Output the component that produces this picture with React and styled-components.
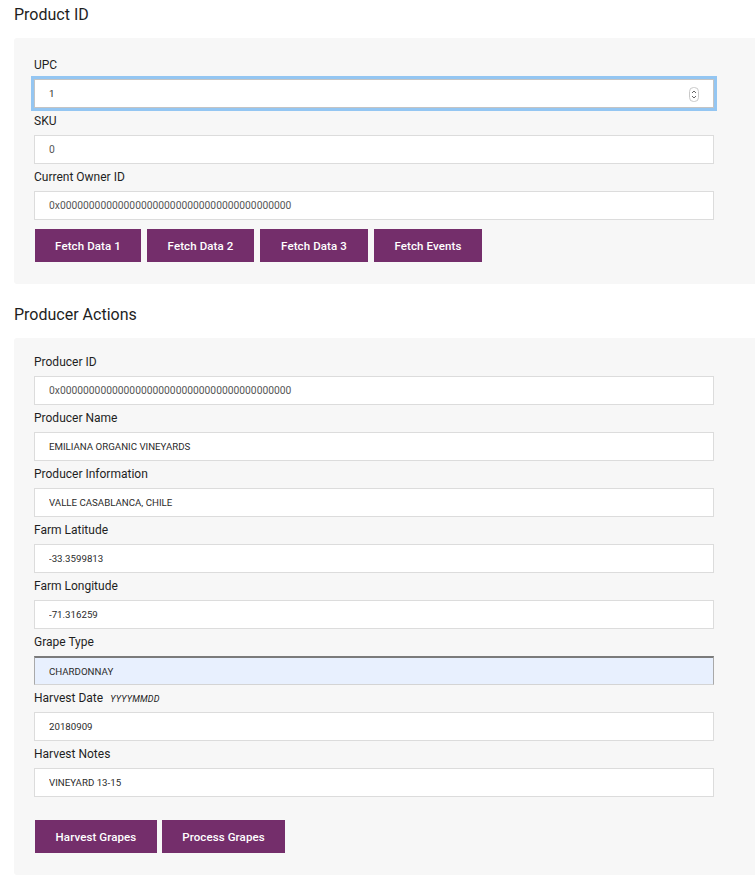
import React from 'react';
import styled, { createGlobalStyle } from 'styled-components';

const GlobalStyle = createGlobalStyle`
  html, body {
    margin: 0;
    padding: 0;
    background: #ffffff;
    overflow: hidden;
  }
  body {
    font-family: Roboto, "Liberation Sans", Arial, sans-serif;
    color: #222;
  }
`;

const Page = styled.div`
  width: 741px;
  padding: 5px 0 0 14px;
`;

const Heading = styled.h2`
  margin: ${(p) => (p.first ? '0' : '21px')} 0 13px 0;
  font-size: 16px;
  line-height: 20px;
  font-weight: 400;
  color: #1e1e1e;
`;

const Panel = styled.div`
  background: #f7f7f7;
  border-radius: 3px 0 0 3px;
  padding: ${(p) => p.padTop || 19}px 20px 22px 20px;
`;

const Field = styled.div`
  display: flex;
  flex-direction: column;
  margin-bottom: 6px;
`;

const Label = styled.label`
  font-size: 12px;
  line-height: 14px;
  height: 14px;
  margin-bottom: 7px;
  color: #1f1f1f;
`;

const Hint = styled.span`
  font-size: 9px;
  font-style: italic;
  margin-left: 7px;
  color: #222;
  letter-spacing: 0.2px;
`;

const InputWrap = styled.div`
  position: relative;
  width: 680px;
  height: 29px;
  box-sizing: border-box;
  border: 1px solid ${(p) => (p.focused ? '#c4c4c4' : '#dcdcdc')};
  background: ${(p) => (p.filled ? '#e8f0fe' : '#ffffff')};
  ${(p) => p.focused && 'box-shadow: 0 0 0 3px #94c6f2;'}
  ${(p) =>
    p.filled &&
    'border-top: 2px solid #7b7b7b; border-left-color: #a9a9a9; border-right-color: #a9a9a9; border-bottom-color: #d4d4d4;'}
`;

const Input = styled.input`
  width: 100%;
  height: 100%;
  box-sizing: border-box;
  border: none;
  outline: none;
  background: transparent;
  padding: 0 14px;
  font-family: Roboto, "Liberation Sans", Arial, sans-serif;
  font-size: ${(p) => (p.dark ? '9.7px' : '10.3px')};
  color: ${(p) => (p.dark ? '#2b2b2b' : '#555')};
`;

const Spinner = styled.svg`
  position: absolute;
  right: 14px;
  top: 7px;
`;

const ButtonRow = styled.div`
  display: flex;
  gap: ${(p) => p.gap || 6}px;
  margin-top: ${(p) => p.top || 4}px;
  padding-left: 1px;
`;

const Button = styled.button`
  width: ${(p) => p.w}px;
  height: 33px;
  border: none;
  border-radius: 0;
  background: #742e6b;
  color: #ffffff;
  font-family: Roboto, "Liberation Sans", Arial, sans-serif;
  font-size: 11.5px;
  font-weight: 500;
  letter-spacing: 0.1px;
  padding: 0;
  cursor: pointer;
`;

const UpDown = () => (
  <Spinner width="10" height="15" viewBox="0 0 10 15">
    <rect x="0.5" y="0.5" width="9" height="14" rx="4" fill="#fff" stroke="#c9c9c9" />
    <path d="M3 6 L5 4 L7 6" fill="none" stroke="#666" strokeWidth="1" />
    <path d="M3 9 L5 11 L7 9" fill="none" stroke="#666" strokeWidth="1" />
  </Spinner>
);

const TextField = ({ label, hint, value, dark, filled, focused, spinner }) => (
  <Field>
    <Label>
      {label}
      {hint && <Hint>{hint}</Hint>}
    </Label>
    <InputWrap filled={filled} focused={focused}>
      <Input defaultValue={value} dark={dark} readOnly />
      {spinner && <UpDown />}
    </InputWrap>
  </Field>
);

const ZERO_ADDR = '0x' + '0'.repeat(40);

const producerFields = [
  { label: 'Producer ID', value: ZERO_ADDR },
  { label: 'Producer Name', value: 'EMILIANA ORGANIC VINEYARDS', dark: true },
  { label: 'Producer Information', value: 'VALLE CASABLANCA, CHILE', dark: true },
  { label: 'Farm Latitude', value: '-33.3599813', dark: true },
  { label: 'Farm Longitude', value: '-71.316259', dark: true },
  { label: 'Grape Type', value: 'CHARDONNAY', dark: true, filled: true },
  { label: 'Harvest Date', hint: 'YYYYMMDD', value: '20180909', dark: true },
  { label: 'Harvest Notes', value: 'VINEYARD 13-15', dark: true },
];

const App = () => (
  <Page>
    <GlobalStyle />
    <Heading first>Product ID</Heading>
    <Panel padTop={20}>
      <TextField label="UPC" value="1" focused spinner dark />
      <TextField label="SKU" value="0" />
      <TextField label="Current Owner ID" value={ZERO_ADDR} />
      <ButtonRow top={9}>
        <Button w={106}>Fetch Data 1</Button>
        <Button w={107}>Fetch Data 2</Button>
        <Button w={108}>Fetch Data 3</Button>
        <Button w={108}>Fetch Events</Button>
      </ButtonRow>
    </Panel>

    <Heading>Producer Actions</Heading>
    <Panel padTop={17}>
      {producerFields.map((f) => (
        <TextField key={f.label} {...f} />
      ))}
      <ButtonRow top={23} gap={5}>
        <Button w={122}>Harvest Grapes</Button>
        <Button w={123}>Process Grapes</Button>
      </ButtonRow>
    </Panel>
  </Page>
);

export default App;
